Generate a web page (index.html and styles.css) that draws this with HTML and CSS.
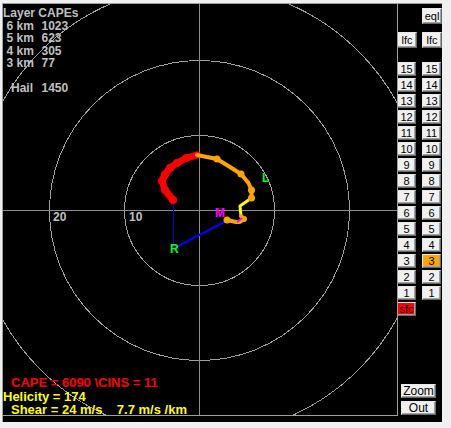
FILE: index.html
```html
<!DOCTYPE html>
<html lang="en">
<head>
    <meta charset="UTF-8">
    <title>Hodograph</title>
    <link rel="stylesheet" href="styles.css">
</head>
<body>
    <div class="window">
        <div class="plot">
            <svg class="hodo" width="394" height="411" viewBox="0 0 394 411">
                <!-- speed rings, 10 kt apart -->
                <g class="rings">
                    <circle cx="196.5" cy="206.5" r="75"/>
                    <circle cx="196.5" cy="206.5" r="150"/>
                    <circle cx="196.5" cy="206.5" r="225"/>
                </g>
                <g class="axes">
                    <line x1="196.5" y1="0" x2="196.5" y2="411"/>
                    <line x1="0" y1="206.5" x2="394" y2="206.5"/>
                </g>
                <text class="ring-label" x="50" y="216.5">20</text>
                <text class="ring-label" x="126" y="216.5">10</text>

                <!-- storm motion to surface wind -->
                <line class="srh-base" x1="170.5" y1="197" x2="170.5" y2="244"/>
                <line class="srh-line" x1="171.5" y1="244" x2="224" y2="216.5"/>

                <!-- wind trace, coloured by height -->
                <polyline class="seg-high" points="170,196 162,186 159,177 162,170.5 167,164 174,159 183.5,154 194,151"/>
                <g class="dots-high">
                    <circle cx="170" cy="196" r="4"/>
                    <circle cx="162" cy="186" r="4"/>
                    <circle cx="159" cy="177" r="4"/>
                    <circle cx="162" cy="170.5" r="4"/>
                    <circle cx="167" cy="164" r="4"/>
                    <circle cx="174" cy="159" r="4"/>
                    <circle cx="183.5" cy="154" r="4"/>
                    <circle cx="194" cy="151" r="3.5"/>
                </g>
                <polyline class="seg-mid" points="194,151 214,155 227,163 238,170 245.5,179 248.5,186 248.5,194"/>
                <polyline class="seg-low" points="248.5,194 237,202 238,212"/>
                <polyline class="seg-mid" points="238,212 241,215 237,218 233,218 224,216"/>
                <g class="dots-mid">
                    <circle cx="214" cy="155" r="3.5"/>
                    <circle cx="238" cy="170" r="3.5"/>
                    <circle cx="248.5" cy="186" r="3.5"/>
                    <circle cx="248.5" cy="194" r="3.5"/>
                    <circle cx="241" cy="215" r="3"/>
                    <circle cx="224" cy="216" r="3.5"/>
                </g>
                <line class="seg-sfc" x1="234" y1="218" x2="239" y2="214"/>

                <text class="tag tag-green" x="259" y="177.5">L</text>
                <text class="tag tag-magenta" x="212" y="212.7">M</text>
                <text class="tag tag-green" x="167" y="248.7">R</text>
            </svg>

            <div class="capes">
                <div class="title">Layer CAPEs</div>
                <div class="row"><span class="lbl">6 km</span><span>1023</span></div>
                <div class="row"><span class="lbl">5 km</span><span>623</span></div>
                <div class="row"><span class="lbl">4 km</span><span>305</span></div>
                <div class="row"><span class="lbl">3 km</span><span>77</span></div>
                <div class="row hail"><span class="lbl">Hail</span><span>1450</span></div>
            </div>

            <div class="indices">
                <div class="cape">CAPE = 6090 \CINS = 11</div>
                <div class="helicity">Helicity = 174</div>
                <div class="shear">Shear = 24 m/s    7.7 m/s /km</div>
            </div>
        </div>

        <div class="levels">
            <div class="pair">
                <span></span>
                <button class="btn tall">eql</button>
            </div>
            <div class="pair lfc-row">
                <button class="btn tall">lfc</button>
                <button class="btn tall">lfc</button>
            </div>
            <div class="level-grid">
                <button class="btn">15</button><button class="btn">15</button>
                <button class="btn">14</button><button class="btn">14</button>
                <button class="btn">13</button><button class="btn">13</button>
                <button class="btn">12</button><button class="btn">12</button>
                <button class="btn">11</button><button class="btn">11</button>
                <button class="btn">10</button><button class="btn">10</button>
                <button class="btn">9</button><button class="btn">9</button>
                <button class="btn">8</button><button class="btn">8</button>
                <button class="btn">7</button><button class="btn">7</button>
                <button class="btn">6</button><button class="btn">6</button>
                <button class="btn">5</button><button class="btn">5</button>
                <button class="btn">4</button><button class="btn">4</button>
                <button class="btn">3</button><button class="btn active">3</button>
                <button class="btn">2</button><button class="btn">2</button>
                <button class="btn">1</button><button class="btn">1</button>
                <button class="btn sfc">sfc</button>
            </div>
            <div class="zoom">
                <button class="btn wide">Zoom</button>
                <button class="btn wide">Out</button>
            </div>
        </div>
    </div>
</body>
</html>
```

FILE: styles.css
```css
body {
    margin: 0;
    background-color: #f0f0f0;
    font-family: "Liberation Sans", Arial, sans-serif;
}
.window {
    display: flex;
    width: 439px;
    height: 418px;
    margin: 3px 0 0 2px;
    background-color: #000;
    border-top: 1px solid #a0a0a0;
    border-left: 1px solid #a0a0a0;
}
.plot {
    position: relative;
    width: 394px;
    height: 411px;
    border-right: 1px solid #a0a0a0;
    border-bottom: 1px solid #a0a0a0;
}
.hodo {
    display: block;
}
.rings circle {
    fill: none;
    stroke: #a0a0a0;
    stroke-width: 1;
    shape-rendering: crispEdges;
}
.axes line {
    stroke: #8c8c8c;
    stroke-width: 1;
    shape-rendering: crispEdges;
}
.ring-label {
    fill: #c0c0c0;
    font: bold 12px "Liberation Sans", Arial, sans-serif;
}
.srh-base {
    stroke: #0000e0;
    stroke-width: 1;
    shape-rendering: crispEdges;
}
.srh-line {
    stroke: #0000ff;
    stroke-width: 2;
}
.seg-high, .seg-mid, .seg-low {
    fill: none;
    stroke-linejoin: round;
    stroke-linecap: round;
}
.seg-high {
    stroke: #ff0000;
    stroke-width: 7;
}
.seg-mid {
    stroke: #ffa500;
    stroke-width: 4;
}
.seg-low {
    stroke: #ffff00;
    stroke-width: 3;
}
.seg-sfc {
    stroke: #ff00ff;
    stroke-width: 2;
}
.dots-high circle {
    fill: #ff0000;
}
.dots-mid circle {
    fill: #ffa500;
}
.tag {
    font: bold 12px "Liberation Sans", Arial, sans-serif;
}
.tag-green {
    fill: #00ff00;
}
.tag-magenta {
    fill: #ff00ff;
}

/* text laid over the plot */
.capes {
    position: absolute;
    top: 3px;
    left: 0;
    color: #c0c0c0;
    font-size: 12px;
    font-weight: bold;
    line-height: 12.5px;
}
.capes .row {
    display: flex;
}
.capes .lbl {
    box-sizing: border-box;
    width: 38.5px;
    padding-left: 3.5px;
}
.capes .hail {
    margin-top: 12.5px;
}
.capes .hail .lbl {
    padding-left: 8px;
}
.indices {
    position: absolute;
    top: 372px;
    left: 0;
    font-size: 13px;
    font-weight: bold;
    line-height: 13.5px;
}
.indices div {
    white-space: pre;
}
.cape {
    color: #ff0000;
    padding-left: 8px;
}
.helicity {
    color: #ffff00;
}
.shear {
    color: #ffff00;
    padding-left: 8px;
}

/* level buttons */
.levels {
    display: flex;
    flex-direction: column;
    width: 45px;
    margin-left: -1px;
}
.pair {
    display: grid;
    grid-template-columns: 19px 19px;
    column-gap: 6px;
    margin-top: 4px;
}
.lfc-row {
    margin-top: 8px;
}
.level-grid {
    display: grid;
    grid-template-columns: 19px 19px;
    grid-auto-rows: 14px;
    column-gap: 6px;
    row-gap: 2px;
    margin-top: 14px;
}
.btn {
    box-sizing: border-box;
    margin: 0;
    padding: 0;
    height: 14px;
    background-color: #f0f0f0;
    border: 1px solid;
    border-color: #e8e8e8 #696969 #696969 #e8e8e8;
    box-shadow: inset -1px -1px #a0a0a0;
    color: #000;
    font-family: "Liberation Sans", Arial, sans-serif;
    font-size: 11px;
    line-height: 11px;
    text-align: center;
    overflow: hidden;
}
.btn.tall {
    height: 16px;
    width: 20px;
}
.btn.active {
    background-color: #ffa500;
}
.btn.sfc {
    background-color: #ff0000;
}
.zoom {
    display: flex;
    flex-direction: column;
    gap: 3px;
    margin: auto 0 7px 4px;
}
.btn.wide {
    width: 35px;
    font-size: 12px;
}
```
